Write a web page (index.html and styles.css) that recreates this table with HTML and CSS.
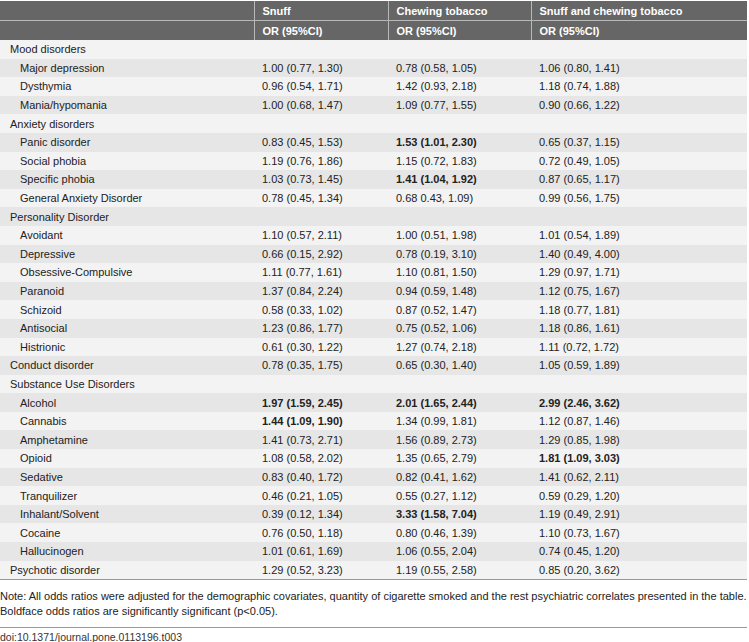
FILE: index.html
```html
<!DOCTYPE html>
<html lang="en">
<head>
    <meta charset="UTF-8">
    <title>Table 3</title>
    <link rel="stylesheet" href="styles.css">
</head>
<body>
    <table class="or-table">
        <colgroup>
            <col class="col-name">
            <col class="col-snuff">
            <col class="col-chew">
            <col class="col-both">
        </colgroup>
        <thead>
            <tr>
                <th></th>
                <th>Snuff</th>
                <th>Chewing tobacco</th>
                <th>Snuff and chewing tobacco</th>
            </tr>
            <tr>
                <th></th>
                <th>OR (95%CI)</th>
                <th>OR (95%CI)</th>
                <th>OR (95%CI)</th>
            </tr>
        </thead>
        <tbody>
            <tr><td>Mood disorders</td><td></td><td></td><td></td></tr>
            <tr><td class="sub">Major depression</td><td>1.00 (0.77, 1.30)</td><td>0.78 (0.58, 1.05)</td><td>1.06 (0.80, 1.41)</td></tr>
            <tr><td class="sub">Dysthymia</td><td>0.96 (0.54, 1.71)</td><td>1.42 (0.93, 2.18)</td><td>1.18 (0.74, 1.88)</td></tr>
            <tr><td class="sub">Mania/hypomania</td><td>1.00 (0.68, 1.47)</td><td>1.09 (0.77, 1.55)</td><td>0.90 (0.66, 1.22)</td></tr>
            <tr><td>Anxiety disorders</td><td></td><td></td><td></td></tr>
            <tr><td class="sub">Panic disorder</td><td>0.83 (0.45, 1.53)</td><td><b>1.53 (1.01, 2.30)</b></td><td>0.65 (0.37, 1.15)</td></tr>
            <tr><td class="sub">Social phobia</td><td>1.19 (0.76, 1.86)</td><td>1.15 (0.72, 1.83)</td><td>0.72 (0.49, 1.05)</td></tr>
            <tr><td class="sub">Specific phobia</td><td>1.03 (0.73, 1.45)</td><td><b>1.41 (1.04, 1.92)</b></td><td>0.87 (0.65, 1.17)</td></tr>
            <tr><td class="sub">General Anxiety Disorder</td><td>0.78 (0.45, 1.34)</td><td>0.68 0.43, 1.09)</td><td>0.99 (0.56, 1.75)</td></tr>
            <tr><td>Personality Disorder</td><td></td><td></td><td></td></tr>
            <tr><td class="sub">Avoidant</td><td>1.10 (0.57, 2.11)</td><td>1.00 (0.51, 1.98)</td><td>1.01 (0.54, 1.89)</td></tr>
            <tr><td class="sub">Depressive</td><td>0.66 (0.15, 2.92)</td><td>0.78 (0.19, 3.10)</td><td>1.40 (0.49, 4.00)</td></tr>
            <tr><td class="sub">Obsessive-Compulsive</td><td>1.11 (0.77, 1.61)</td><td>1.10 (0.81, 1.50)</td><td>1.29 (0.97, 1.71)</td></tr>
            <tr><td class="sub">Paranoid</td><td>1.37 (0.84, 2.24)</td><td>0.94 (0.59, 1.48)</td><td>1.12 (0.75, 1.67)</td></tr>
            <tr><td class="sub">Schizoid</td><td>0.58 (0.33, 1.02)</td><td>0.87 (0.52, 1.47)</td><td>1.18 (0.77, 1.81)</td></tr>
            <tr><td class="sub">Antisocial</td><td>1.23 (0.86, 1.77)</td><td>0.75 (0.52, 1.06)</td><td>1.18 (0.86, 1.61)</td></tr>
            <tr><td class="sub">Histrionic</td><td>0.61 (0.30, 1.22)</td><td>1.27 (0.74, 2.18)</td><td>1.11 (0.72, 1.72)</td></tr>
            <tr><td>Conduct disorder</td><td>0.78 (0.35, 1.75)</td><td>0.65 (0.30, 1.40)</td><td>1.05 (0.59, 1.89)</td></tr>
            <tr><td>Substance Use Disorders</td><td></td><td></td><td></td></tr>
            <tr><td class="sub">Alcohol</td><td><b>1.97 (1.59, 2.45)</b></td><td><b>2.01 (1.65, 2.44)</b></td><td><b>2.99 (2.46, 3.62)</b></td></tr>
            <tr><td class="sub">Cannabis</td><td><b>1.44 (1.09, 1.90)</b></td><td>1.34 (0.99, 1.81)</td><td>1.12 (0.87, 1.46)</td></tr>
            <tr><td class="sub">Amphetamine</td><td>1.41 (0.73, 2.71)</td><td>1.56 (0.89, 2.73)</td><td>1.29 (0.85, 1.98)</td></tr>
            <tr><td class="sub">Opioid</td><td>1.08 (0.58, 2.02)</td><td>1.35 (0.65, 2.79)</td><td><b>1.81 (1.09, 3.03)</b></td></tr>
            <tr><td class="sub">Sedative</td><td>0.83 (0.40, 1.72)</td><td>0.82 (0.41, 1.62)</td><td>1.41 (0.62, 2.11)</td></tr>
            <tr><td class="sub">Tranquilizer</td><td>0.46 (0.21, 1.05)</td><td>0.55 (0.27, 1.12)</td><td>0.59 (0.29, 1.20)</td></tr>
            <tr><td class="sub">Inhalant/Solvent</td><td>0.39 (0.12, 1.34)</td><td><b>3.33 (1.58, 7.04)</b></td><td>1.19 (0.49, 2.91)</td></tr>
            <tr><td class="sub">Cocaine</td><td>0.76 (0.50, 1.18)</td><td>0.80 (0.46, 1.39)</td><td>1.10 (0.73, 1.67)</td></tr>
            <tr><td class="sub">Hallucinogen</td><td>1.01 (0.61, 1.69)</td><td>1.06 (0.55, 2.04)</td><td>0.74 (0.45, 1.20)</td></tr>
            <tr><td>Psychotic disorder</td><td>1.29 (0.52, 3.23)</td><td>1.19 (0.55, 2.58)</td><td>0.85 (0.20, 3.62)</td></tr>
        </tbody>
    </table>

    <div class="note">
        Note: All odds ratios were adjusted for the demographic covariates, quantity of cigarette smoked and the rest psychiatric correlates presented in the table.<br>
        Boldface odds ratios are significantly significant (p&lt;0.05).
    </div>

    <div class="doi">doi:10.1371/journal.pone.0113196.t003</div>
</body>
</html>
```

FILE: styles.css
```css
body {
    margin: 0;
    padding: 1px 2px 0 0;
    background-color: #fff;
    font-family: "Liberation Sans", Arial, sans-serif;
    color: #222;
}

.or-table {
    width: 747px;
    border-collapse: collapse;
    table-layout: fixed;
    font-size: 11px;
    border-bottom: 1px solid #999;
}

.col-name { width: 254px; }
.col-snuff { width: 134px; }
.col-chew { width: 143px; }
.col-both { width: 216px; }

.or-table th {
    background-color: #666;
    color: #fff;
    text-align: left;
    font-weight: bold;
    height: 19px;
    padding: 0 8px;
    border-left: 1px solid #b8b8b8;
}

.or-table th:first-child {
    border-left: none;
}

.or-table thead tr:first-child th {
    border-bottom: 1px solid #b8b8b8;
}

.or-table td {
    height: 18.6px;
    padding: 0 8px;
    white-space: nowrap;
}

.or-table td:first-child {
    padding-left: 10px;
}

.or-table td.sub {
    padding-left: 20px;
}

.or-table tbody tr:nth-child(odd) {
    background-color: #f3f3f3;
}

.or-table tbody tr:nth-child(even) {
    background-color: #e6e6e6;
}

.note {
    font-size: 11px;
    line-height: 15px;
    color: #222;
    padding: 9px 0 0 0;
    white-space: nowrap;
}

.doi {
    margin-top: 8px;
    border-top: 1px solid #999;
    font-size: 10.5px;
    padding-top: 3px;
    color: #333;
}
```
